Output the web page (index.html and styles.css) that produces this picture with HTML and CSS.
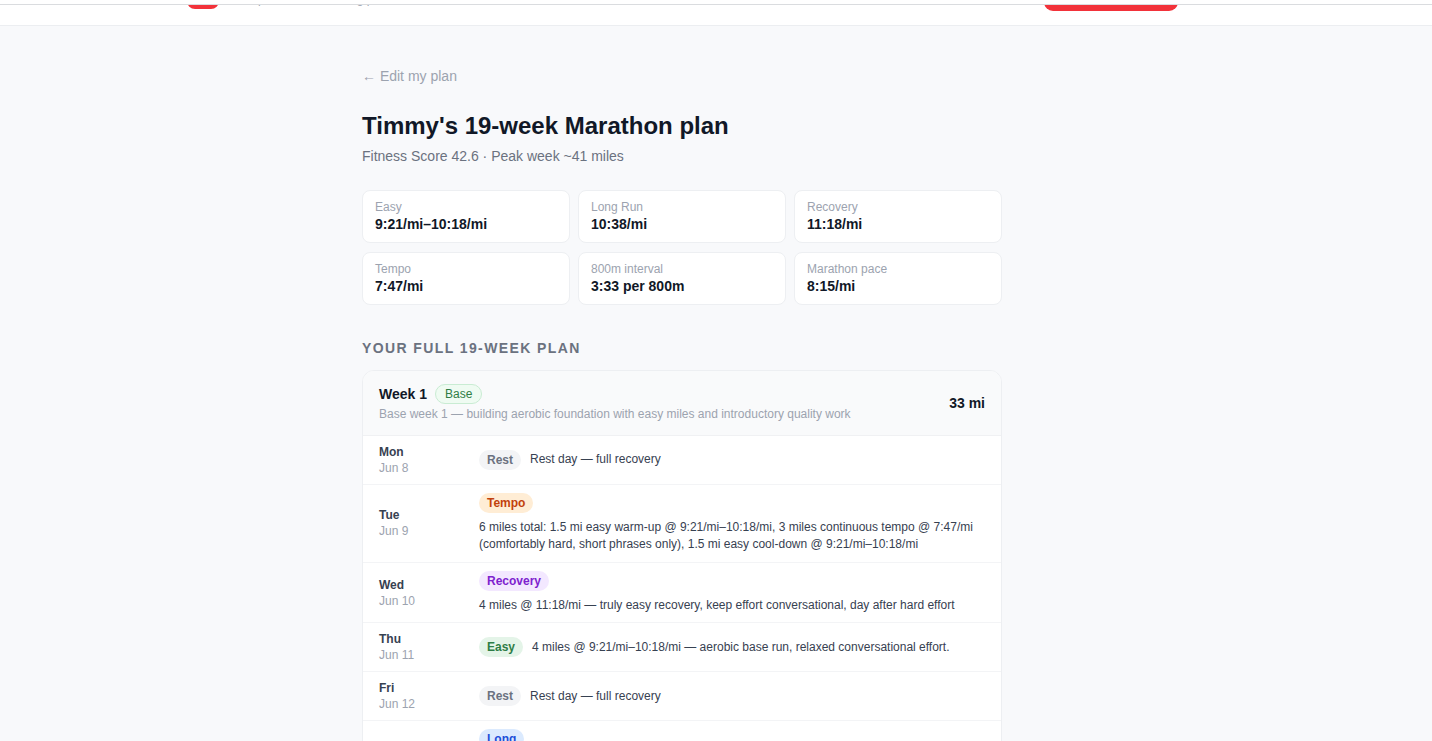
FILE: index.html
```html
<!DOCTYPE html>
<html lang="en">
<head>
<meta charset="utf-8">
<title>Timmy's 19-week Marathon plan</title>
<link rel="stylesheet" href="styles.css">
</head>
<body>
<header class="topbar">
  <div class="topbar-clip">
    <div class="topbar-inner">
      <div class="brand">
        <span class="logo"></span>
        <span class="tagline">Free pace-based training plans</span>
      </div>
      <a class="cta" href="#">Build my plan</a>
    </div>
  </div>
</header>

<main class="shell">
  <div class="content">
    <a class="back" href="#">← Edit my plan</a>
    <h1 class="title">Timmy's 19-week Marathon plan</h1>
    <p class="subtitle">Fitness Score 42.6 · Peak week ~41 miles</p>

    <div class="paces">
      <div class="pace"><div class="pace-label">Easy</div><div class="pace-value">9:21/mi–10:18/mi</div></div>
      <div class="pace"><div class="pace-label">Long Run</div><div class="pace-value">10:38/mi</div></div>
      <div class="pace"><div class="pace-label">Recovery</div><div class="pace-value">11:18/mi</div></div>
      <div class="pace"><div class="pace-label">Tempo</div><div class="pace-value">7:47/mi</div></div>
      <div class="pace"><div class="pace-label">800m interval</div><div class="pace-value">3:33 per 800m</div></div>
      <div class="pace"><div class="pace-label">Marathon pace</div><div class="pace-value">8:15/mi</div></div>
    </div>

    <h2 class="section">Your full 19-week plan</h2>

    <section class="week">
      <div class="week-head">
        <div class="week-info">
          <div class="week-title"><span class="week-name">Week 1</span><span class="phase">Base</span></div>
          <div class="week-desc">Base week 1 — building aerobic foundation with easy miles and introductory quality work</div>
        </div>
        <div class="week-miles">33 mi</div>
      </div>

      <div class="day">
        <div class="day-when"><div class="day-name">Mon</div><div class="day-date">Jun 8</div></div>
        <div class="day-body"><span class="tag tag-rest">Rest</span><span class="day-text">Rest day — full recovery</span></div>
      </div>
      <div class="day">
        <div class="day-when"><div class="day-name">Tue</div><div class="day-date">Jun 9</div></div>
        <div class="day-body"><span class="tag tag-tempo">Tempo</span><span class="day-text">6 miles total: 1.5 mi easy warm-up @ 9:21/mi–10:18/mi, 3 miles continuous tempo @ 7:47/mi (comfortably hard, short phrases only), 1.5 mi easy cool-down @ 9:21/mi–10:18/mi</span></div>
      </div>
      <div class="day">
        <div class="day-when"><div class="day-name">Wed</div><div class="day-date">Jun 10</div></div>
        <div class="day-body"><span class="tag tag-recovery">Recovery</span><span class="day-text">4 miles @ 11:18/mi — truly easy recovery, keep effort conversational, day after hard effort</span></div>
      </div>
      <div class="day">
        <div class="day-when"><div class="day-name">Thu</div><div class="day-date">Jun 11</div></div>
        <div class="day-body"><span class="tag tag-easy">Easy</span><span class="day-text">4 miles @ 9:21/mi–10:18/mi — aerobic base run, relaxed conversational effort.</span></div>
      </div>
      <div class="day">
        <div class="day-when"><div class="day-name">Fri</div><div class="day-date">Jun 12</div></div>
        <div class="day-body"><span class="tag tag-rest">Rest</span><span class="day-text">Rest day — full recovery</span></div>
      </div>
      <div class="day">
        <div class="day-when"><div class="day-name">Sat</div><div class="day-date">Jun 13</div></div>
        <div class="day-body"><span class="tag tag-long">Long</span><span class="day-text">8 miles @ 10:38/mi — steady long run at easy effort, practice fueling and hydration every 30–40 minutes</span></div>
      </div>
      <div class="day">
        <div class="day-when"><div class="day-name">Sun</div><div class="day-date">Jun 14</div></div>
        <div class="day-body"><span class="tag tag-easy">Easy</span><span class="day-text">5 miles @ 9:21/mi–10:18/mi — aerobic base run, relaxed conversational effort.</span></div>
      </div>
    </section>
  </div>
</main>
</body>
</html>
```

FILE: styles.css
```css
* { box-sizing: border-box; }

html, body {
  margin: 0;
  padding: 0;
}

body {
  background: #f8f9fb;
  font-family: "Liberation Sans", Arial, Helvetica, sans-serif;
  color: #111827;
}

a { text-decoration: none; }

/* ---------- top bar (scrolled, mostly hidden) ---------- */
.topbar {
  background: #ffffff;
  padding-top: 4px;
  border-bottom: 1px solid #eceef1;
}

.topbar-clip {
  height: 21px;
  border-top: 1px solid #dadcdf;
  overflow: hidden;
}

.topbar-inner {
  width: 992px;
  margin-left: 187px;
  height: 36px;
  margin-top: -30px;
  display: flex;
  align-items: center;
  justify-content: space-between;
}

.brand {
  display: flex;
  align-items: center;
  gap: 11px;
  height: 100%;
}

.logo {
  width: 32px;
  height: 32px;
  border-radius: 8px;
  background: #f2323a;
}

.tagline {
  align-self: flex-end;
  font-size: 12px;
  line-height: 12px;
  margin-bottom: 6px;
  color: #9ca3af;
}

.cta {
  width: 134px;
  height: 36px;
  border-radius: 9px;
  background: #f2323a;
  color: #ffffff;
  font-size: 14px;
  font-weight: 700;
  display: flex;
  align-items: center;
  justify-content: center;
  margin-right: 1px;
}

/* ---------- main ---------- */
.shell {
  width: 992px;
  margin-left: 186px;
  padding-left: 176px;
}

.content {
  width: 640px;
  padding-top: 40px;
  padding-bottom: 40px;
}

.back {
  display: block;
  font-size: 14px;
  line-height: 20px;
  color: #9ca3af;
}

.title {
  margin: 24px 0 0;
  font-size: 24px;
  line-height: 32px;
  font-weight: 700;
  color: #111827;
}

.subtitle {
  margin: 4px 0 0;
  font-size: 14px;
  line-height: 20px;
  color: #6b7280;
}

.paces {
  margin-top: 24px;
  display: grid;
  grid-template-columns: repeat(3, 1fr);
  gap: 9px 8px;
}

.pace {
  background: #ffffff;
  border: 1px solid #edeff2;
  border-radius: 8px;
  padding: 8px 12px 9px;
}

.pace-label {
  font-size: 12px;
  line-height: 16px;
  color: #9ca3af;
}

.pace-value {
  font-size: 14px;
  line-height: 18px;
  font-weight: 700;
  color: #111827;
}

.section {
  margin: 33px 0 0;
  font-size: 14px;
  line-height: 20px;
  font-weight: 700;
  letter-spacing: 1.4px;
  text-transform: uppercase;
  color: #6b7280;
}

.week {
  margin-top: 12px;
  background: #ffffff;
  border: 1px solid #edeff2;
  border-radius: 12px;
  overflow: hidden;
}

.week-head {
  background: #f9fafb;
  padding: 13px 16px 13px;
  display: flex;
  align-items: center;
  justify-content: space-between;
  border-bottom: 1px solid #f0f1f3;
}

.week-title {
  display: flex;
  align-items: center;
  gap: 8px;
}

.week-name {
  font-size: 14px;
  font-weight: 700;
  color: #111827;
}

.phase {
  height: 20px;
  line-height: 18px;
  padding: 0 9px;
  border: 1px solid #c9ecd3;
  background: #effbf2;
  color: #2f7d45;
  font-size: 12px;
  border-radius: 999px;
}

.week-desc {
  margin-top: 2px;
  font-size: 12px;
  line-height: 16px;
  color: #9ca3af;
}

.week-miles {
  font-size: 14px;
  font-weight: 700;
  color: #111827;
}

.day {
  display: flex;
  align-items: center;
  padding: 8px 16px;
  border-bottom: 1px solid #f3f4f6;
}

.day-when {
  width: 100px;
  flex-shrink: 0;
}

.day-name {
  font-size: 12px;
  line-height: 16px;
  font-weight: 700;
  color: #374151;
}

.day-date {
  font-size: 12px;
  line-height: 16px;
  color: #9ca3af;
}

.day-body {
  flex: 1;
  display: flex;
  flex-wrap: wrap;
  align-items: center;
  gap: 6px 9px;
}

.tag {
  height: 20px;
  line-height: 20px;
  padding: 0 8px;
  border-radius: 999px;
  font-size: 12px;
  font-weight: 700;
}

.tag-rest { background: #f3f4f6; color: #6b7280; }
.tag-tempo { background: #ffedd5; color: #c2410c; }
.tag-recovery { background: #f3e8ff; color: #7e22ce; }
.tag-easy { background: #e4f4e8; color: #2e7d46; }
.tag-long { background: #dbeafe; color: #1d4ed8; }

.day-text {
  font-size: 12px;
  line-height: 17.4px;
  color: #374151;
}
```
